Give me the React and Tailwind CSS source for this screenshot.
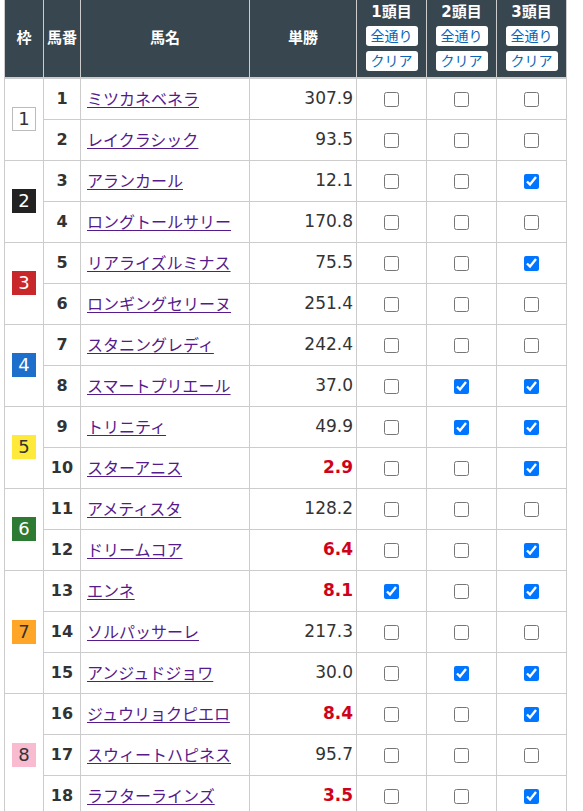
import { useState } from 'react';

const FRAMES = [
  { no: 1, cls: 'bg-white text-[#333] border border-[#bbb]' },
  { no: 2, cls: 'bg-[#222] text-white' },
  { no: 3, cls: 'bg-[#c8272b] text-white' },
  { no: 4, cls: 'bg-[#1e6ecb] text-white' },
  { no: 5, cls: 'bg-[#ffe93a] text-[#333]' },
  { no: 6, cls: 'bg-[#2d7b33] text-white' },
  { no: 7, cls: 'bg-[#ffa629] text-[#333]' },
  { no: 8, cls: 'bg-[#f8bbd0] text-[#333]' },
];

const HORSES = [
  { frame: 1, no: 1, name: 'ミツカネベネラ', odds: '307.9', picks: [0, 0, 0] },
  { frame: 1, no: 2, name: 'レイクラシック', odds: '93.5', picks: [0, 0, 0] },
  { frame: 2, no: 3, name: 'アランカール', odds: '12.1', picks: [0, 0, 1] },
  { frame: 2, no: 4, name: 'ロングトールサリー', odds: '170.8', picks: [0, 0, 0] },
  { frame: 3, no: 5, name: 'リアライズルミナス', odds: '75.5', picks: [0, 0, 1] },
  { frame: 3, no: 6, name: 'ロンギングセリーヌ', odds: '251.4', picks: [0, 0, 0] },
  { frame: 4, no: 7, name: 'スタニングレディ', odds: '242.4', picks: [0, 0, 0] },
  { frame: 4, no: 8, name: 'スマートプリエール', odds: '37.0', picks: [0, 1, 1] },
  { frame: 5, no: 9, name: 'トリニティ', odds: '49.9', picks: [0, 1, 1] },
  { frame: 5, no: 10, name: 'スターアニス', odds: '2.9', picks: [0, 0, 1] },
  { frame: 6, no: 11, name: 'アメティスタ', odds: '128.2', picks: [0, 0, 0] },
  { frame: 6, no: 12, name: 'ドリームコア', odds: '6.4', picks: [0, 0, 1] },
  { frame: 7, no: 13, name: 'エンネ', odds: '8.1', picks: [1, 0, 1] },
  { frame: 7, no: 14, name: 'ソルパッサーレ', odds: '217.3', picks: [0, 0, 0] },
  { frame: 7, no: 15, name: 'アンジュドジョワ', odds: '30.0', picks: [0, 1, 1] },
  { frame: 8, no: 16, name: 'ジュウリョクピエロ', odds: '8.4', picks: [0, 0, 1] },
  { frame: 8, no: 17, name: 'スウィートハピネス', odds: '95.7', picks: [0, 0, 0] },
  { frame: 8, no: 18, name: 'ラフターラインズ', odds: '3.5', picks: [0, 0, 1] },
];

const th = 'border border-[#ccc] border-t-0 border-b-2 text-white font-bold text-[15px]';
const td = 'border border-[#ccc] align-middle';

export default function App() {
  const [picks, setPicks] = useState(HORSES.map((h) => h.picks.map(Boolean)));

  const toggle = (row, col) => {
    setPicks((prev) =>
      prev.map((p, i) => (i === row ? p.map((v, j) => (j === col ? !v : v)) : p))
    );
  };

  const setColumn = (col, value) => {
    setPicks((prev) => prev.map((p) => p.map((v, j) => (j === col ? value : v))));
  };

  return (
    <div className="bg-white min-h-screen pl-[4px] font-['DejaVu_Sans','Noto_Sans_CJK_JP',sans-serif] text-[#333]">
      <table className="table-fixed border-collapse w-[563px]">
        <colgroup>
          <col className="w-[39px]" />
          <col className="w-[37px]" />
          <col className="w-[169px]" />
          <col className="w-[107px]" />
          <col className="w-[70px]" />
          <col className="w-[70px]" />
          <col className="w-[70px]" />
        </colgroup>
        <thead className="bg-[#37464f]">
          <tr className="h-[78px]">
            <th className={`${th} align-middle`}>枠</th>
            <th className={`${th} align-middle`}>馬番</th>
            <th className={`${th} align-middle`}>馬名</th>
            <th className={`${th} align-middle`}>単勝</th>
            {[1, 2, 3].map((n, col) => (
              <th key={n} className={`${th} align-top pt-[2px]`}>
                <div className="flex flex-col items-center">
                  <span className="leading-[20px] mb-[4px]">{n}頭目</span>
                  <button
                    onClick={() => setColumn(col, true)}
                    className="w-[52px] h-[20px] mb-[5px] rounded-[3px] bg-white text-[#0a66b8] text-[14px] font-normal leading-[20px]"
                  >
                    全通り
                  </button>
                  <button
                    onClick={() => setColumn(col, false)}
                    className="w-[52px] h-[20px] rounded-[3px] bg-white text-[#0a66b8] text-[14px] font-normal leading-[20px]"
                  >
                    クリア
                  </button>
                </div>
              </th>
            ))}
          </tr>
        </thead>
        <tbody>
          {HORSES.map((h, i) => {
            const first = i === 0 || HORSES[i - 1].frame !== h.frame;
            const span = HORSES.filter((x) => x.frame === h.frame).length;
            const frame = FRAMES[h.frame - 1];
            const popular = parseFloat(h.odds) < 10;
            return (
              <tr key={h.no} className="h-[41px]">
                {first && (
                  <td rowSpan={span} className={td}>
                    <div
                      className={`mx-auto w-[24px] h-[24px] flex items-center justify-center text-[18px] leading-none ${frame.cls}`}
                    >
                      {frame.no}
                    </div>
                  </td>
                )}
                <td className={`${td} text-center font-bold text-[16px]`}>{h.no}</td>
                <td className={`${td} pl-[6px]`}>
                  <a
                    href="#"
                    className="text-[16px] text-[#551a8b] underline underline-offset-2 font-['Noto_Sans_CJK_JP',sans-serif]"
                  >
                    {h.name}
                  </a>
                </td>
                <td
                  className={`${td} text-right pr-[3px] text-[17px] ${
                    popular ? 'text-[#d0021b] font-bold' : 'text-[#333]'
                  }`}
                >
                  {h.odds}
                </td>
                {picks[i].map((v, col) => (
                  <td key={col} className={`${td} text-center`}>
                    <input
                      type="checkbox"
                      checked={v}
                      onChange={() => toggle(i, col)}
                      className="m-0 w-[15px] h-[15px] align-middle"
                    />
                  </td>
                ))}
              </tr>
            );
          })}
        </tbody>
      </table>
    </div>
  );
}
